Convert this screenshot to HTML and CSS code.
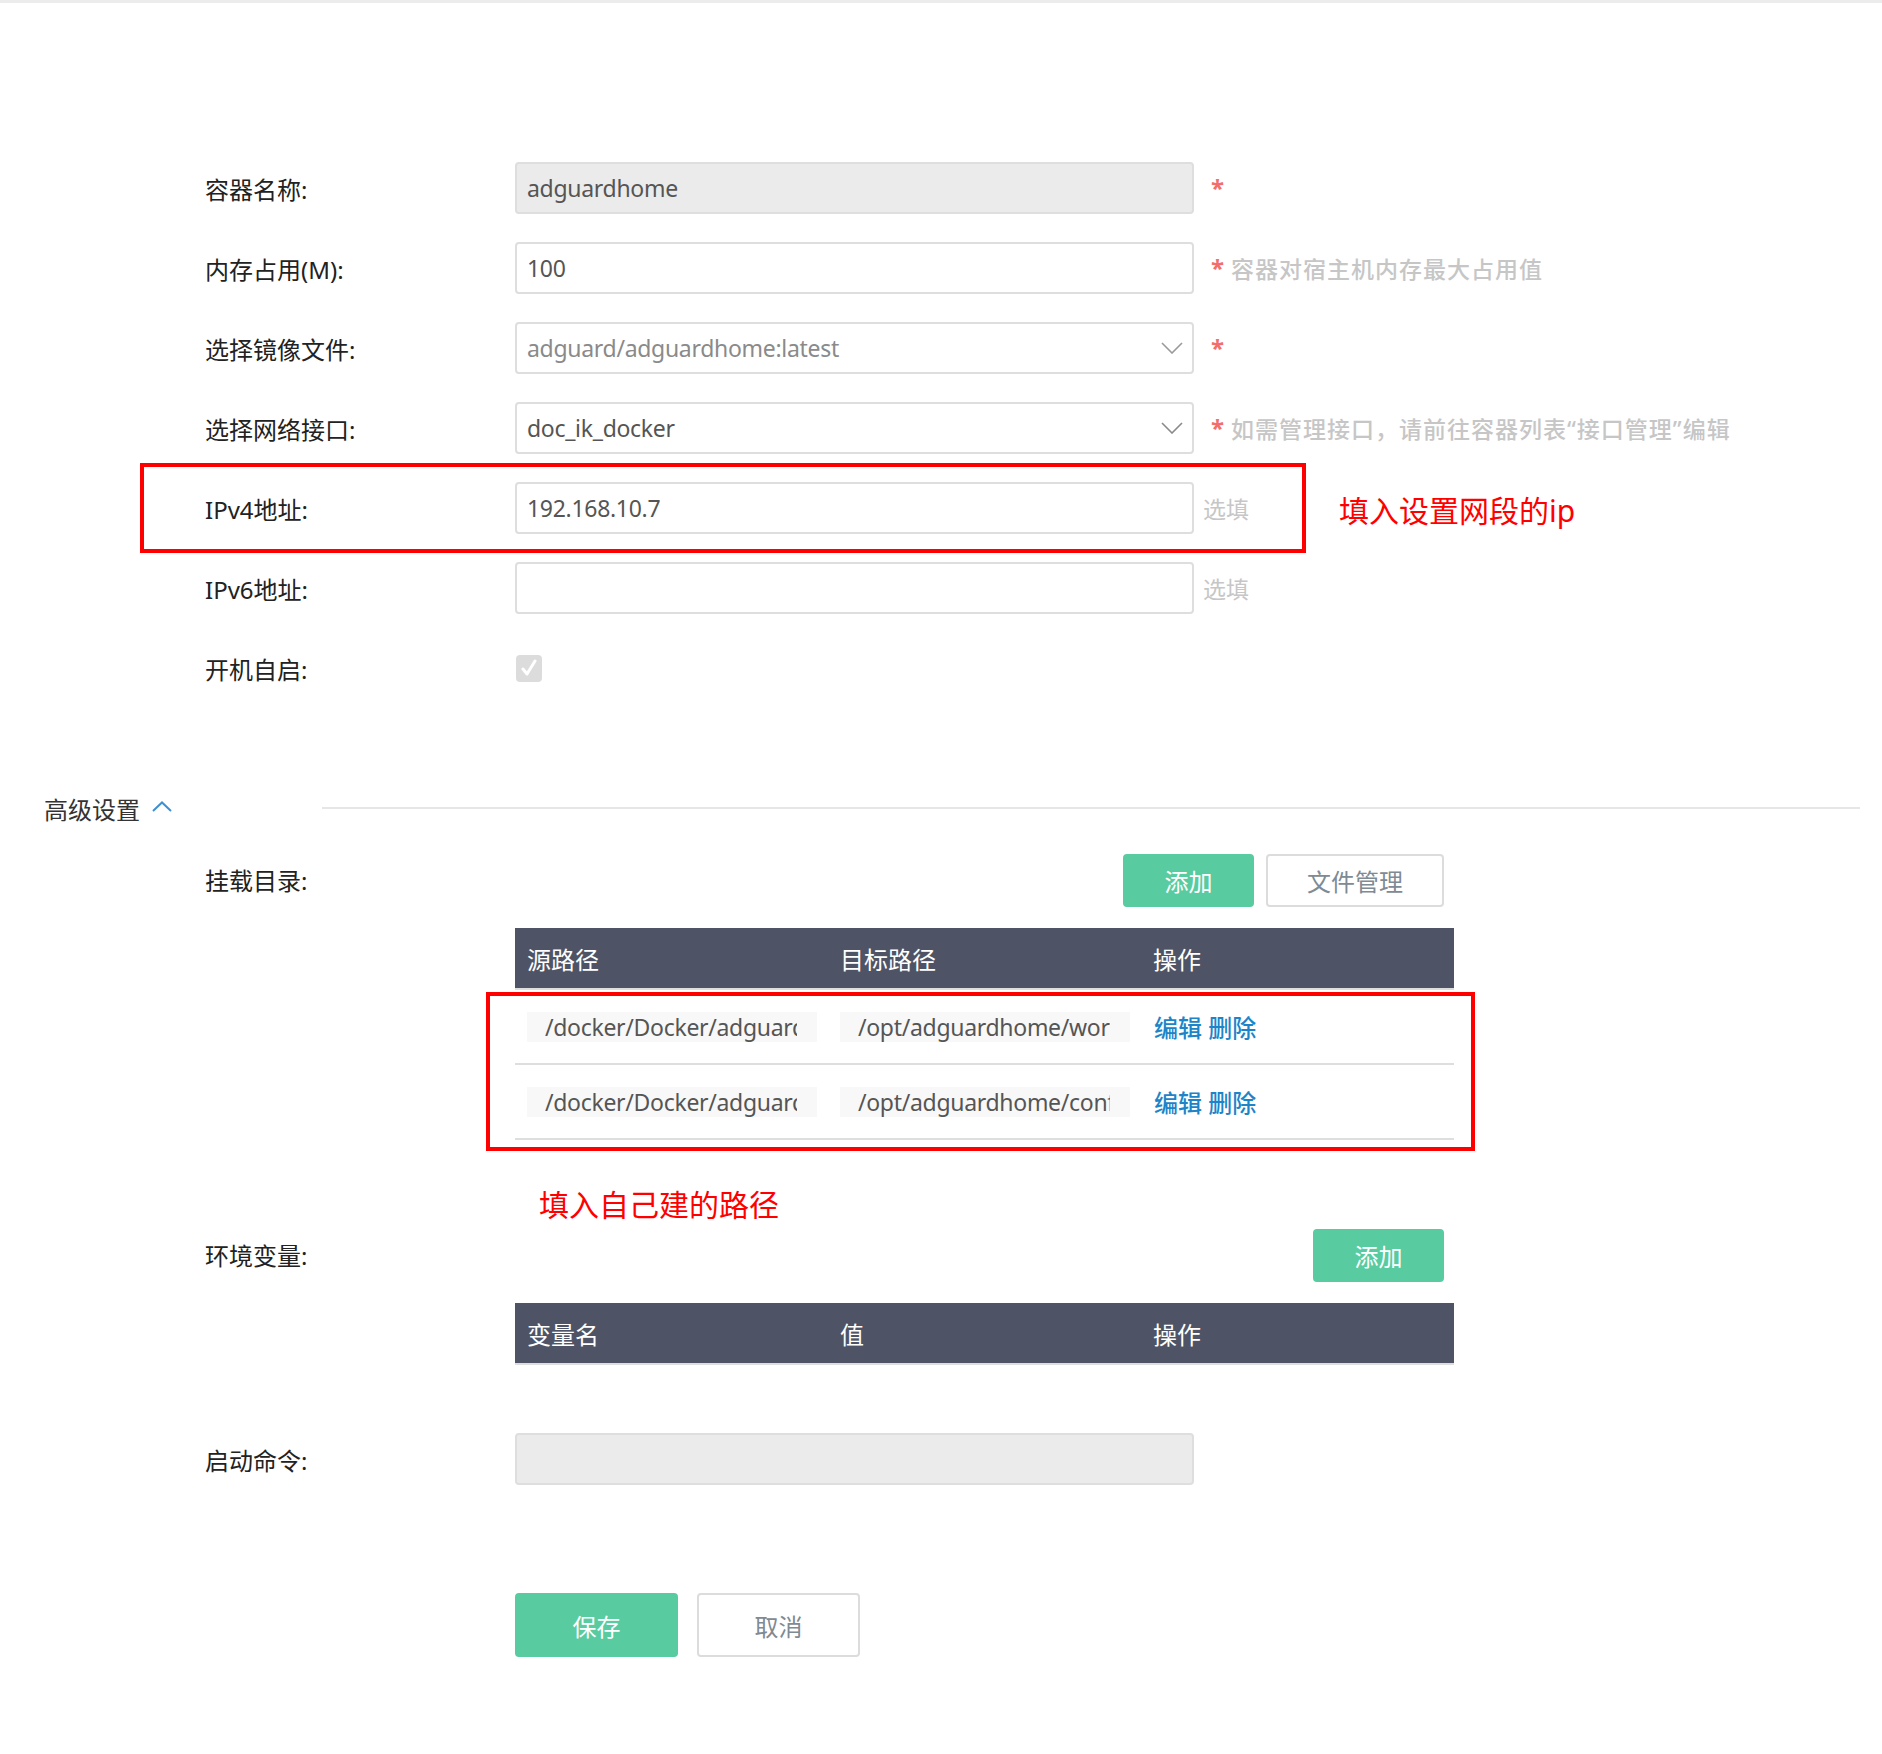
FILE: index.html
```html
<!DOCTYPE html>
<html lang="zh-CN">
<head>
<meta charset="utf-8">
<title>容器设置</title>
<link rel="stylesheet" href="styles.css">
</head>
<body>
<div class="page">
  <div class="form-row">
    <div class="label">容器名称:</div>
    <div class="field disabled">adguardhome</div>
    <span class="req">*</span>
  </div>
  <div class="form-row">
    <div class="label">内存占用(M):</div>
    <div class="field">100</div>
    <span class="req">*</span><span class="hint">容器对宿主机内存最大占用值</span>
  </div>
  <div class="form-row">
    <div class="label">选择镜像文件:</div>
    <div class="field select muted">adguard/adguardhome:latest
      <svg class="arrow" width="22" height="12" viewBox="0 0 22 12"><polyline points="1,1 11,11 21,1" fill="none" stroke="#9a9a9a" stroke-width="1.6"/></svg>
    </div>
    <span class="req">*</span>
  </div>
  <div class="form-row">
    <div class="label">选择网络接口:</div>
    <div class="field select">doc_ik_docker
      <svg class="arrow" width="22" height="12" viewBox="0 0 22 12"><polyline points="1,1 11,11 21,1" fill="none" stroke="#8a8a8a" stroke-width="1.6"/></svg>
    </div>
    <span class="req">*</span><span class="hint">如需管理接口，请前往容器列表“接口管理”编辑</span>
  </div>
  <div class="form-row">
    <div class="label">IPv4地址:</div>
    <div class="field">192.168.10.7</div>
    <span class="optional">选填</span>
    <div class="mark-box mark-ipv4"></div>
    <div class="note note-ipv4">填入设置网段的ip</div>
  </div>
  <div class="form-row">
    <div class="label">IPv6地址:</div>
    <div class="field"></div>
    <span class="optional">选填</span>
  </div>
  <div class="form-row">
    <div class="label">开机自启:</div>
    <div class="checkbox">
      <svg width="18" height="18" viewBox="0 0 18 18"><path d="M3 10 L7 15 L15 2" fill="none" stroke="#fff" stroke-width="3" stroke-linecap="round" stroke-linejoin="round"/></svg>
    </div>
  </div>

  <div class="section-head">
    <span class="section-title">高级设置</span>
    <svg class="chev" width="20" height="11" viewBox="0 0 20 11"><polyline points="1,10 10,1.5 19,10" fill="none" stroke="#3f8fd2" stroke-width="2"/></svg>
    <div class="divider"></div>
  </div>

  <div class="block mount">
    <div class="block-label">挂载目录:</div>
    <div class="block-body">
      <div class="toolbar">
        <button class="btn btn-green">添加</button>
        <button class="btn btn-plain btn-wide">文件管理</button>
      </div>
      <div class="table">
        <div class="thead">
          <div class="th">源路径</div>
          <div class="th">目标路径</div>
          <div class="th">操作</div>
        </div>
        <div class="tbody">
          <div class="tr">
            <div class="td"><div class="cell-input"><span class="clip">/docker/Docker/adguardhome/work</span></div></div>
            <div class="td"><div class="cell-input"><span class="clip">/opt/adguardhome/work</span></div></div>
            <div class="td links"><a>编辑</a> <a>删除</a></div>
          </div>
          <div class="tr">
            <div class="td"><div class="cell-input"><span class="clip">/docker/Docker/adguardhome/conf</span></div></div>
            <div class="td"><div class="cell-input"><span class="clip">/opt/adguardhome/conf</span></div></div>
            <div class="td links"><a>编辑</a> <a>删除</a></div>
          </div>
          <div class="mark-box mark-table"></div>
        </div>
      </div>
      <div class="note note-path">填入自己建的路径</div>
    </div>
  </div>

  <div class="block env">
    <div class="block-label">环境变量:</div>
    <div class="block-body">
      <div class="toolbar">
        <button class="btn btn-green">添加</button>
      </div>
      <div class="table">
        <div class="thead">
          <div class="th">变量名</div>
          <div class="th">值</div>
          <div class="th">操作</div>
        </div>
      </div>
    </div>
  </div>

  <div class="form-row cmd-row">
    <div class="label">启动命令:</div>
    <div class="field disabled"></div>
  </div>

  <div class="actions">
    <button class="btn btn-green btn-big">保存</button>
    <button class="btn btn-plain btn-big">取消</button>
  </div>
</div>
</body>
</html>
```

FILE: styles.css
```css
html, body {
  margin: 0;
  padding: 0;
  background: #ffffff;
}
body {
  border-top: 3px solid #ececec;
  font-family: "Noto Sans", "Noto Sans CJK SC", sans-serif;
  color: #222;
}
.page {
  padding-top: 145px;
  padding-bottom: 98px;
}
.form-row {
  position: relative;
  display: flex;
  align-items: center;
  height: 80px;
  padding-left: 205px;
}
.label {
  width: 310px;
  flex: none;
  font-size: 24px;
  color: #222;
}
.field {
  box-sizing: border-box;
  width: 679px;
  height: 52px;
  flex: none;
  display: flex;
  align-items: center;
  padding: 0 10px;
  border: 2px solid #dedede;
  border-radius: 4px;
  font-size: 23px;
  letter-spacing: -0.3px;
  color: #555;
  background: #fff;
}
.field.disabled {
  background: #ebebeb;
}
.field.muted {
  color: #8a8a8a;
}
.field.select .arrow {
  margin-left: auto;
  margin-right: -1px;
}
.req {
  margin-left: 17px;
  font-size: 24px;
  color: #f36d6d;
  font-weight: bold;
  line-height: 1;
}
.hint {
  margin-left: 7px;
  font-size: 23px;
  color: #c6c6c6;
  letter-spacing: 1px;
  font-weight: 500;
}
.optional {
  margin-left: 9px;
  font-size: 23px;
  color: #c6c6c6;
}
.mark-box {
  position: absolute;
  border: 4px solid #ff0000;
  box-sizing: border-box;
  pointer-events: none;
}
.mark-ipv4 {
  left: 140px;
  top: -5px;
  width: 1166px;
  height: 90px;
}
.note {
  color: #ff0000;
  font-size: 30px;
}
.note-ipv4 {
  position: absolute;
  left: 1339px;
  top: 19px;
}
.checkbox {
  width: 26px;
  height: 27px;
  margin-left: 1px;
  border-radius: 4px;
  background: #dcdcdc;
  display: flex;
  align-items: center;
  justify-content: center;
}
.section-head {
  display: flex;
  align-items: center;
  height: 40px;
  margin-top: 80px;
  padding-left: 44px;
  padding-right: 22px;
}
.section-title {
  font-size: 24px;
  color: #333;
}
.chev {
  margin-left: 12px;
  margin-top: -4px;
}
.divider {
  flex: 1;
  margin-left: 150px;
  height: 2px;
  background: #e6e6e6;
}
.block {
  display: flex;
  padding-left: 205px;
}
.mount {
  margin-top: 26px;
}
.env {
  margin-top: 4px;
}
.block-label {
  width: 310px;
  flex: none;
  height: 53px;
  line-height: 53px;
  font-size: 24px;
  color: #222;
}
.block-body {
  width: 939px;
}
.toolbar {
  display: flex;
  justify-content: flex-end;
  gap: 12px;
  padding-right: 10px;
}
.btn {
  box-sizing: border-box;
  height: 53px;
  width: 131px;
  border-radius: 4px;
  font-family: "Noto Sans CJK SC", sans-serif;
  font-size: 24px;
  cursor: pointer;
  padding: 0;
}
.btn-green {
  background: #59cba0;
  border: none;
  color: #fff;
}
.btn-plain {
  background: #fff;
  border: 2px solid #dcdcdc;
  color: #7e8a94;
}
.btn-wide {
  width: 178px;
}
.btn-big {
  width: 163px;
  height: 64px;
}
.table {
  margin-top: 21px;
}
.thead {
  display: grid;
  grid-template-columns: repeat(3, 1fr);
  height: 60px;
  align-items: center;
  background: #4e5466;
  border-bottom: 2px solid #dedede;
}
.th {
  padding-left: 12px;
  font-size: 24px;
  color: #fff;
}
.tbody {
  position: relative;
}
.tr {
  display: grid;
  grid-template-columns: repeat(3, 1fr);
  height: 73px;
  align-items: center;
  border-bottom: 2px solid #dedede;
}
.td {
  padding-left: 12px;
}
.cell-input {
  box-sizing: border-box;
  width: 290px;
  height: 30px;
  padding: 0 20px 0 18px;
  background: #f8f8f8;
  font-size: 23px;
  letter-spacing: -0.3px;
  line-height: 30px;
  color: #555;
}
.clip {
  display: block;
  white-space: nowrap;
  overflow: hidden;
}
.links {
  padding-left: 13px;
  font-size: 24px;
  color: #1d84c8;
  font-weight: 500;
}
.links a {
  color: #1d84c8;
}
.mark-table {
  left: -29px;
  top: 2px;
  width: 989px;
  height: 159px;
}
.note-path {
  margin-top: 45px;
  padding-left: 24px;
  height: 40px;
  line-height: 40px;
}
.cmd-row {
  margin-top: 54px;
}
.actions {
  display: flex;
  gap: 19px;
  margin-top: 94px;
  padding-left: 515px;
}
```
